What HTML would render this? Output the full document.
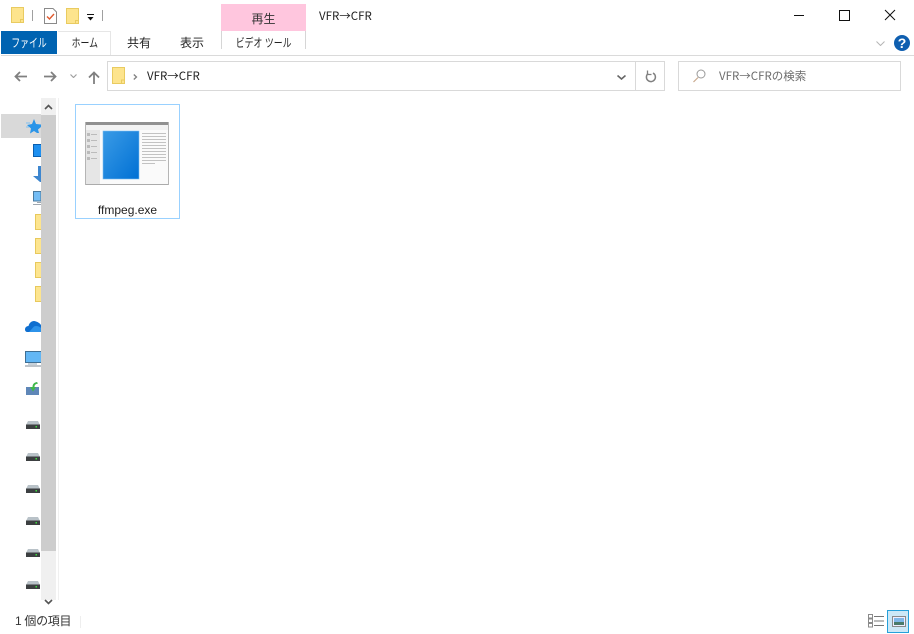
<!DOCTYPE html>
<html lang="ja">
<head>
<meta charset="utf-8">
<style>
html,body{margin:0;padding:0;background:#fff;}
body{width:914px;height:634px;position:relative;overflow:hidden;font-family:"Liberation Sans","Noto Sans CJK JP",sans-serif;font-size:12px;color:#222;}
.a{position:absolute;}
.t{position:absolute;white-space:nowrap;line-height:16px;}
.n{font-family:"Noto Sans CJK JP","Liberation Sans",sans-serif;}
.s{display:inline-block;transform:scaleX(.74);transform-origin:center;}
svg{position:absolute;overflow:hidden;}
.fd{position:absolute;background:#fde58f;border:1px solid #e8c95c;box-sizing:border-box;}
</style>
</head>
<body>
<!-- quick access toolbar -->
<svg style="left:11px;top:7px" width="13" height="16"><path d="M.5.5H12.500V15.500H.5Z" fill="#fde48d" stroke="#e9cb60"/><path d="M9.500 15V12.500H12.500" fill="none" stroke="#e9cb60"/></svg>
<div class="a" style="left:32px;top:10px;width:1px;height:11px;background:#a0a0a0"></div>
<svg style="left:44px;top:8px" width="13" height="17"><path d="M.5.5H9L12.500 4V15.500H.5Z" fill="#fff" stroke="#8a8a8a"/><path d="M3 8.500L5.500 11L10 6" fill="none" stroke="#e0582c" stroke-width="1.400"/></svg>
<svg style="left:66px;top:8px" width="13" height="17"><path d="M.5.5H12.500V15.500H.5Z" fill="#fde48d" stroke="#e9cb60"/><path d="M9.500 15V12.500H12.500" fill="none" stroke="#e9cb60"/></svg>
<svg style="left:87px;top:14px" width="7" height="7"><path d="M0 .5H7" stroke="#111" fill="none"/><path d="M.5 3H6.500L3.500 6.500Z" fill="#111"/></svg>
<div class="a" style="left:102px;top:10px;width:1px;height:11px;background:#a0a0a0"></div>

<!-- contextual tab -->
<div class="a" style="left:221px;top:4px;width:85px;height:27px;background:#ffc6de"></div>
<div class="t" style="left:221px;top:11px;width:85px;text-align:center;color:#333">再生</div>
<div class="a" style="left:221px;top:31px;width:1px;height:18px;background:#d6d6d6"></div>
<div class="a" style="left:305px;top:31px;width:1px;height:18px;background:#d6d6d6"></div>
<div class="t n" style="left:319px;top:8px;color:#222;font-size:11.500px">VFR→CFR</div>

<!-- window controls -->
<div class="a" style="left:794px;top:15px;width:10px;height:1px;background:#111"></div>
<div class="a" style="left:839px;top:10px;width:9px;height:9px;border:1px solid #111"></div>
<svg style="left:884px;top:9px" width="12" height="12"><path d="M1 1L11 11M11 1L1 11" stroke="#111" fill="none"/></svg>

<!-- ribbon tabs -->
<div class="a" style="left:1px;top:31px;width:56px;height:23px;background:#0063b1"></div>
<div class="t" style="left:1px;top:35px;width:56px;text-align:center;color:#fff"><span class="s">ファイル</span></div>
<div class="a" style="left:58px;top:31px;width:53px;height:24px;border-top:1px solid #e6e6e6;border-right:1px solid #e6e6e6;box-sizing:border-box"></div>
<div class="t" style="left:58px;top:35px;width:53px;text-align:center"><span class="s">ホーム</span></div>
<div class="t" style="left:127px;top:35px">共有</div>
<div class="t" style="left:180px;top:35px">表示</div>
<div class="t" style="left:221px;top:35px;width:85px;text-align:center"><span class="s">ビデオ ツール</span></div>
<div class="a" style="left:1px;top:55px;width:913px;height:1px;background:#dadada"></div>
<svg style="left:876px;top:41px" width="9" height="5"><path d="M.5 .5L4.500 4.500L8.500 .5" stroke="#b5b5b5" fill="none"/></svg>
<div class="a" style="left:894px;top:35px;width:16px;height:16px;border-radius:50%;background:#0f5fb0;color:#fff;font-weight:bold;font-size:14px;line-height:16px;text-align:center">?</div>

<!-- nav -->
<svg style="left:14px;top:71px" width="13" height="11"><path d="M13 5.500H1.500M6 1L1.500 5.500L6 10" stroke="#808080" stroke-width="1.800" fill="none"/></svg>
<svg style="left:44px;top:71px" width="13" height="11"><path d="M0 5.500H11.500M7 1L11.500 5.500L7 10" stroke="#808080" stroke-width="1.800" fill="none"/></svg>
<svg style="left:70px;top:74px" width="7" height="4"><path d="M.5 .5L3.500 3.500L6.500 .5" stroke="#a0a0a0" stroke-width="1.200" fill="none"/></svg>
<svg style="left:88px;top:71px" width="12" height="13"><path d="M6 13V1.500M1 6.500L6 1.500L11 6.500" stroke="#808080" stroke-width="1.800" fill="none"/></svg>

<!-- address bar -->
<div class="a" style="left:107px;top:61px;width:558px;height:30px;border:1px solid #d9d9d9;box-sizing:border-box"></div>
<div class="a" style="left:635px;top:61px;width:1px;height:30px;background:#d9d9d9"></div>
<svg style="left:112px;top:67px" width="13" height="17"><path d="M.5.5H12.500V16.500H.5Z" fill="#fde48d" stroke="#e9cb60"/><path d="M9.500 16V13H12.500" fill="none" stroke="#e9cb60"/></svg>
<svg style="left:133px;top:74px" width="5" height="6"><path d="M.8 .5L3.500 3L.8 5.500" stroke="#808080" stroke-width="1.300" fill="none"/></svg>
<div class="t n" style="left:147px;top:68px;font-size:11.500px">VFR→CFR</div>
<svg style="left:617px;top:75px" width="9" height="5"><path d="M.5 .5L4.500 4L8.500 .5" stroke="#666" stroke-width="1.600" fill="none"/></svg>
<svg style="left:645px;top:70px" width="12" height="13"><path d="M3.200 3.500A4.500 4.500 0 1 0 8 3.100" stroke="#808080" stroke-width="1.500" fill="none"/><path d="M2.500 .5V4.500H6.500" stroke="#808080" stroke-width="1.300" fill="none"/></svg>

<!-- search -->
<div class="a" style="left:678px;top:61px;width:223px;height:30px;border:1px solid #d9d9d9;box-sizing:border-box"></div>
<svg style="left:693px;top:69px" width="13" height="14"><circle cx="8" cy="5" r="4" stroke="#999" fill="none"/><path d="M5 8.500L.5 13" stroke="#c9a98e" stroke-width="1.200" fill="none"/></svg>
<div class="t n" style="left:719px;top:68px;color:#6d6d6d;font-size:11.500px">VFR→CFRの検索</div>

<!-- sidebar -->
<div class="a" style="left:1px;top:114px;width:40px;height:24px;background:#d9d9d9"></div>
<svg style="left:26px;top:118px" width="15" height="16"><path d="M8 1L10 6L15 6.500V9L12 11.500L13 15H11L8 13L4 15.500L5 10.500L1 7L6 6Z" fill="#2b95e8"/><path d="M0 5H4M0 9H3" stroke="#7fc0f0" fill="none"/></svg>
<div class="a" style="left:33px;top:144px;width:8px;height:13px;background:#1e90f0;border:1px solid #0a5fb0;border-right:0;box-sizing:border-box"></div>
<svg style="left:33px;top:166px" width="8" height="16"><path d="M5 0H8V16H7L0 10H5Z" fill="#3d86cf"/></svg>
<svg style="left:33px;top:191px" width="8" height="15"><path d="M.5.500H8V10H.5Z" fill="#74bdf5" stroke="#4a7a9f"/><path d="M0 13.500H8" stroke="#a0a8b0"/><path d="M4 11.500H8" stroke="#a0a8b0"/></svg>
<div class="fd" style="left:35px;top:214px;width:6px;height:16px;border-right:0"></div>
<div class="fd" style="left:35px;top:238px;width:6px;height:16px;border-right:0"></div>
<div class="fd" style="left:35px;top:262px;width:6px;height:16px;border-right:0"></div>
<div class="fd" style="left:35px;top:286px;width:6px;height:16px;border-right:0"></div>
<svg style="left:25px;top:320px" width="16" height="12"><path d="M0 9.500C0 7.500 1.500 6 3.500 6C4.500 2 8 0 11 1.500C13 2 14.500 3 16 5V12H2.500C1 12 0 11 0 9.500Z" fill="#0f6fd0"/><path d="M4 12L9 6.500C11 5.500 14 6 16 8V12Z" fill="#2d93ea"/></svg>
<svg style="left:25px;top:351px" width="16" height="16"><rect x=".5" y=".5" width="16" height="11" fill="#63b7f5" stroke="#3f6f94"/><path d="M3 13H12" stroke="#8fa3b3"/><path d="M0 15H16" stroke="#a9b1b8" stroke-width="1.500"/></svg>
<svg style="left:26px;top:382px" width="13" height="13"><rect y="5" width="13" height="8" fill="#5f87b8"/><path d="M11 0C8 .5 6.500 2 6.500 5H4L7 9.500L10 5H8.500C8.500 3 9.500 2 12 1.500Z" fill="#3fb84a"/></svg>

<!-- drives -->
<svg style="left:26px;top:421px" width="14" height="8"><path d="M2 0H12L14 4H0Z" fill="#b9c2c8"/><rect y="3.500" width="14" height="4.500" fill="#3c3f41"/><rect x="9.500" y="5" width="1.500" height="1.500" fill="#3ddc3d"/></svg>
<svg style="left:26px;top:453px" width="14" height="8"><path d="M2 0H12L14 4H0Z" fill="#b9c2c8"/><rect y="3.500" width="14" height="4.500" fill="#3c3f41"/><rect x="9.500" y="5" width="1.500" height="1.500" fill="#3ddc3d"/></svg>
<svg style="left:26px;top:485px" width="14" height="8"><path d="M2 0H12L14 4H0Z" fill="#b9c2c8"/><rect y="3.500" width="14" height="4.500" fill="#3c3f41"/><rect x="9.500" y="5" width="1.500" height="1.500" fill="#3ddc3d"/></svg>
<svg style="left:26px;top:517px" width="14" height="8"><path d="M2 0H12L14 4H0Z" fill="#b9c2c8"/><rect y="3.500" width="14" height="4.500" fill="#3c3f41"/><rect x="9.500" y="5" width="1.500" height="1.500" fill="#3ddc3d"/></svg>
<svg style="left:26px;top:549px" width="14" height="8"><path d="M2 0H12L14 4H0Z" fill="#b9c2c8"/><rect y="3.500" width="14" height="4.500" fill="#3c3f41"/><rect x="9.500" y="5" width="1.500" height="1.500" fill="#3ddc3d"/></svg>
<svg style="left:26px;top:581px" width="14" height="8"><path d="M2 0H12L14 4H0Z" fill="#b9c2c8"/><rect y="3.500" width="14" height="4.500" fill="#3c3f41"/><rect x="9.500" y="5" width="1.500" height="1.500" fill="#3ddc3d"/></svg>

<!-- scrollbar -->
<div class="a" style="left:41px;top:98px;width:15px;height:502px;background:#f0f0f0"></div>
<div class="a" style="left:41px;top:115px;width:15px;height:436px;background:#cdcdcd"></div>
<svg style="left:44px;top:104px" width="9" height="6"><path d="M1 5L4.500 1.500L8 5" stroke="#555" stroke-width="1.600" fill="none"/></svg>
<svg style="left:44px;top:599px" width="9" height="6"><path d="M1 1L4.500 4.500L8 1" stroke="#555" stroke-width="1.600" fill="none"/></svg>
<div class="a" style="left:58px;top:98px;width:1px;height:502px;background:#f0f0f0"></div>

<!-- file item -->
<div class="a" style="left:75px;top:104px;width:105px;height:115px;border:1px solid #99d1ff;box-sizing:border-box"></div>
<svg style="left:85px;top:122px" width="84" height="63">
<rect width="84" height="63" fill="#fafafa"/>
<rect width="84" height="3" fill="#909090"/>
<rect y="3" width="84" height="5" fill="#f2f2f2"/>
<rect y="8" width="15" height="55" fill="#e6e6e6"/>
<rect x="0" y="62" width="84" height="1" fill="#ababab"/>
<rect x="0" width="1" height="63" fill="#b5b5b5"/>
<rect x="83" width="1" height="63" fill="#b5b5b5"/>
<defs><linearGradient id="g" x1="0" y1="0" x2="1" y2="1"><stop offset="0" stop-color="#3a9be6"/><stop offset="1" stop-color="#0070d4"/></linearGradient></defs>
<rect x="18" y="9" width="36" height="48" fill="url(#g)" stroke="#7cbdf0" stroke-width=".6"/>
<g fill="#c2c2c2"><rect x="57" y="11" width="24" height="1"/><rect x="57" y="14" width="24" height="1"/><rect x="57" y="17" width="24" height="1"/><rect x="57" y="20" width="24" height="1"/><rect x="57" y="23" width="24" height="1"/><rect x="57" y="26" width="24" height="1"/><rect x="57" y="29" width="24" height="1"/><rect x="57" y="32" width="24" height="1"/><rect x="57" y="35" width="24" height="1"/><rect x="57" y="38" width="24" height="1"/><rect x="57" y="41" width="13" height="1"/></g>
<g fill="#bbb"><rect x="2" y="11" width="3" height="3"/><rect x="2" y="17" width="3" height="3"/><rect x="2" y="23" width="3" height="3"/><rect x="2" y="29" width="3" height="3"/><rect x="2" y="35" width="3" height="3"/><rect x="6" y="12" width="6" height="1"/><rect x="6" y="18" width="6" height="1"/><rect x="6" y="24" width="6" height="1"/><rect x="6" y="30" width="6" height="1"/><rect x="6" y="36" width="6" height="1"/></g>
</svg>
<div class="t" style="left:75px;top:202px;width:105px;text-align:center;font-size:12px">ffmpeg.exe</div>

<!-- status bar -->
<div class="t" style="left:15px;top:613px;color:#333;letter-spacing:-.3px">1 個の項目</div>
<div class="a" style="left:80px;top:616px;width:1px;height:12px;background:#eee"></div>
<svg style="left:868px;top:614px" width="17" height="14"><g fill="#fff" stroke="#8a8a8a"><rect x=".5" y=".5" width="4" height="3.500"/><rect x=".5" y="5" width="4" height="3.500"/><rect x=".5" y="9.500" width="4" height="3.500"/></g><path d="M6 2.500H16M6 7H16M6 11.500H16" stroke="#777" fill="none"/></svg>
<div class="a" style="left:887px;top:610px;width:22px;height:23px;background:#cce8f7;border:1px solid #26a0da;box-sizing:border-box"></div>
<svg style="left:892px;top:616px" width="14" height="11"><rect x=".5" y=".5" width="13" height="10" fill="#eef" stroke="#8a8a8a"/><rect x="2" y="2" width="10" height="4" fill="#7fb7e8"/><rect x="2" y="6" width="10" height="3" fill="#4a7a6a"/></svg>
</body>
</html>
